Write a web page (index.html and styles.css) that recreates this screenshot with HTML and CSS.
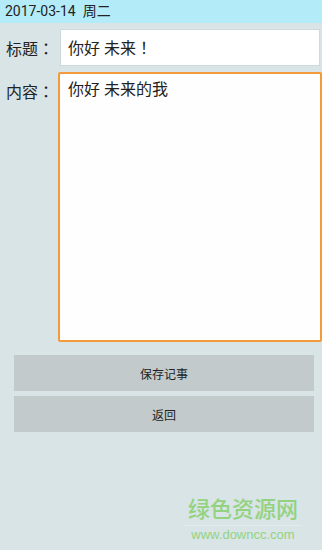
FILE: index.html
```html
<!DOCTYPE html>
<html lang="zh">
<head>
    <meta charset="UTF-8">
    <meta name="viewport" content="width=device-width, initial-scale=1.0">
    <title>记事</title>
    <link rel="stylesheet" href="styles.css">
</head>
<body>
    <div class="date_bar">2017-03-14&nbsp;&nbsp;周二</div>
    <form class="note_form">
        <div class="row">
            <label class="lbl" for="title">标题<span class="punct" lang="ja">：</span></label>
            <div class="title_box">你好 未来<span class="punct" lang="ja">！</span></div>
        </div>
        <div class="row">
            <label class="lbl" for="content">内容<span class="punct" lang="ja">：</span></label>
            <textarea id="content" class="content_input">你好 未来的我</textarea>
        </div>
        <div class="buttons">
            <button type="button" class="btn">保存记事</button>
            <button type="button" class="btn">返回</button>
        </div>
    </form>
    <div class="watermark">
        <div class="wm_cn">绿色资源网</div>
        <div class="wm_url">www.downcc.com</div>
    </div>
</body>
</html>
```
FILE: styles.css
```css
body {
    margin: 0;
    width: 322px;
    height: 550px;
    overflow: hidden;
    background-color: #d9e4e7;
    font-family: Roboto, "Noto Sans CJK SC", sans-serif;
    color: #222;
    position: relative;
}
.date_bar {
    height: 23px;
    line-height: 23px;
    padding-left: 5px;
    background-color: #b3ecf8;
    font-size: 14px;
    color: #222;
}
.note_form {
    padding-top: 6px;
}
.row {
    display: flex;
    align-items: flex-start;
    margin-bottom: 6px;
}
.lbl {
    width: 58px;
    flex-shrink: 0;
    padding-left: 6px;
    box-sizing: border-box;
    font-size: 16px;
    line-height: 20px;
    padding-top: 9px;
    color: #222;
    white-space: nowrap;
}
.punct {
    font-family: "Noto Sans CJK JP", sans-serif;
}
.title_box {
    margin-left: 2px;
    width: 260px;
    height: 37px;
    line-height: 35px;
    box-sizing: border-box;
    border: 1px solid #cfd8da;
    background-color: #fff;
    font-size: 16px;
    padding: 0 7px;
    color: #222;
}
.content_input {
    width: 264px;
    height: 270px;
    box-sizing: border-box;
    border: 2px solid #f29a3c;
    border-radius: 2px;
    background-color: #fefefe;
    font-family: inherit;
    font-size: 16px;
    line-height: 20px;
    padding: 6px 8px;
    color: #222;
    resize: none;
    outline: none;
}
.buttons {
    padding: 7px 8px 0 14px;
    display: flex;
    flex-direction: column;
    gap: 5px;
}
.btn {
    width: 300px;
    height: 36px;
    border: none;
    background-color: #c3cacc;
    font-family: inherit;
    font-size: 12px;
    color: #222;
}
.watermark {
    position: absolute;
    left: 184px;
    top: 497px;
    width: 118px;
    text-align: center;
    white-space: nowrap;
}
.wm_cn {
    font-size: 22px;
    line-height: 26px;
    font-weight: 500;
    color: #93d37f;
    border-bottom: 1px solid #e3ecec;
    padding-bottom: 2px;
}
.wm_url {
    font-family: "Liberation Sans", sans-serif;
    font-size: 13px;
    line-height: 18px;
    color: #93d37f;
}
```
